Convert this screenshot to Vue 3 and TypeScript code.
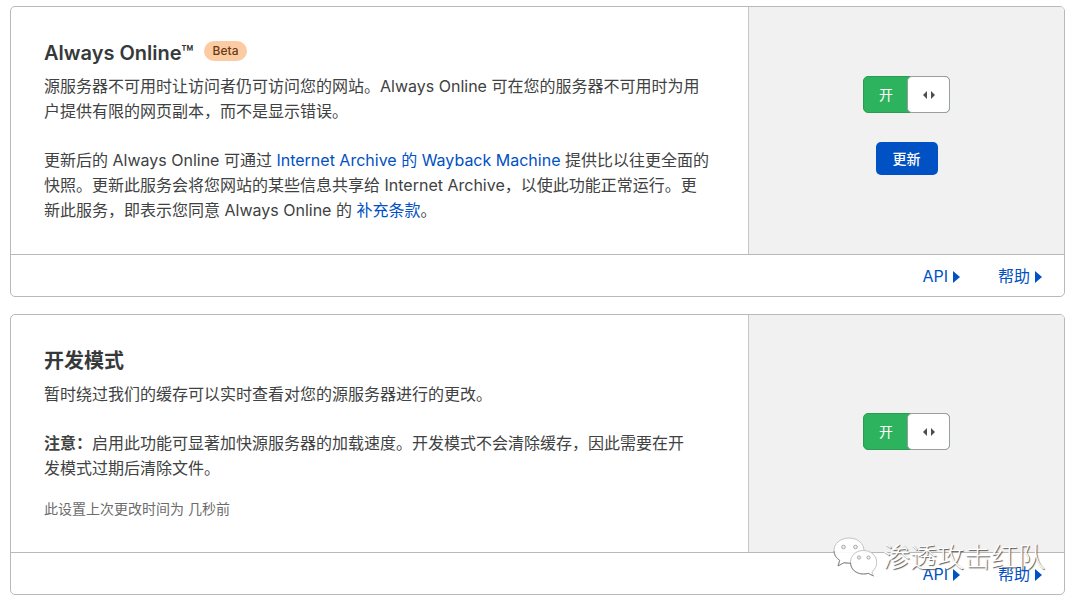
<script setup lang="ts">
import { ref } from 'vue'

const alwaysOnline = ref(true)
const devMode = ref(true)
</script>

<template>
  <main class="page">
    <section class="card">
      <div class="row">
        <div class="info">
          <h2>Always Online™ <span class="badge">Beta</span></h2>
          <p>源服务器不可用时让访问者仍可访问您的网站。Always Online 可在您的服务器不可用时为用户提供有限的网页副本，而不是显示错误。</p>
          <p>更新后的 Always Online 可通过 <a href="#">Internet Archive 的 Wayback Machine</a> 提供比以往更全面的快照。更新此服务会将您网站的某些信息共享给 Internet Archive，以使此功能正常运行。更新此服务，即表示您同意 Always Online 的 <a href="#">补充条款</a>。</p>
        </div>
        <div class="control">
          <label class="toggle">
            <input v-model="alwaysOnline" type="checkbox" aria-label="Always Online" />
            <span class="state">开</span>
            <span class="knob">
              <svg width="14" height="10" viewBox="0 0 14 10"><path d="M5 1v8L1 5zM9 1v8l4-4z" fill="#4d4d4d" /></svg>
            </span>
          </label>
          <button type="button" class="update">更新</button>
        </div>
      </div>
      <footer>
        <a href="#">API<svg width="7" height="12" viewBox="0 0 7 12"><path d="M0 0l7 6-7 6z" fill="currentColor" /></svg></a>
        <a href="#">帮助<svg width="7" height="12" viewBox="0 0 7 12"><path d="M0 0l7 6-7 6z" fill="currentColor" /></svg></a>
      </footer>
    </section>

    <section class="card">
      <div class="row">
        <div class="info">
          <h2>开发模式</h2>
          <p>暂时绕过我们的缓存可以实时查看对您的源服务器进行的更改。</p>
          <p><strong>注意：</strong>启用此功能可显著加快源服务器的加载速度。开发模式不会清除缓存，因此需要在开<br />发模式过期后清除文件。</p>
          <p class="changed">此设置上次更改时间为 几秒前</p>
        </div>
        <div class="control">
          <label class="toggle">
            <input v-model="devMode" type="checkbox" aria-label="开发模式" />
            <span class="state">开</span>
            <span class="knob">
              <svg width="14" height="10" viewBox="0 0 14 10"><path d="M5 1v8L1 5zM9 1v8l4-4z" fill="#4d4d4d" /></svg>
            </span>
          </label>
        </div>
      </div>
      <footer>
        <a href="#">API<svg width="7" height="12" viewBox="0 0 7 12"><path d="M0 0l7 6-7 6z" fill="currentColor" /></svg></a>
        <a href="#">帮助<svg width="7" height="12" viewBox="0 0 7 12"><path d="M0 0l7 6-7 6z" fill="currentColor" /></svg></a>
      </footer>
      <div class="watermark">
        <svg width="46" height="42" viewBox="0 0 46 42">
          <g fill="#fff" fill-opacity=".9" stroke="#c4c4c4" stroke-width="1">
            <path d="M17 1C8.500 1 2 6.500 2 13.500c0 4 2.200 7.500 5.700 9.800L6 29l6-3.300c1.600.5 3.300.8 5 .8 8.500 0 15-5.500 15-12.800S25.500 1 17 1z" />
            <path d="M31.500 13.500C24 13.500 18.500 18.500 18.500 25.500S24 37 31.500 37c1.700 0 3.200-.2 4.700-.7L41.500 39l-1.600-4.200c3-2.200 4.800-5.500 4.800-9.300 0-7-5.700-12-13.200-12z" />
          </g>
          <g fill="none" stroke="#8a8a8a" stroke-width="1">
            <path d="M18.500 25.500C18.500 32 24 37 31.500 37c1.700 0 3.200-.2 4.700-.7L41.500 39M2 14c0 4 2.200 7.200 5.700 9.300L6 29l6-3.300 6 .5" />
          </g>
          <g fill="#f0f0f0" stroke="#a8a8a8" stroke-width="1">
            <circle cx="11.500" cy="10" r="1.800" /><circle cx="23.500" cy="10" r="1.800" />
            <circle cx="27" cy="20.500" r="1.600" /><circle cx="36.500" cy="20.500" r="1.600" />
          </g>
        </svg>
        <span>渗透攻击红队</span>
      </div>
    </section>
  </main>
</template>

<style>
body {
  margin: 0;
  background: #fff;
}
</style>

<style scoped>
.page {
  display: flex;
  flex-direction: column;
  gap: 17px;
  padding: 6px 15px 10px 10px;
  font: 16px/25px Inter, "Noto Sans CJK SC", sans-serif;
  color: #404242;
}
.card {
  position: relative;
  border: 1px solid #b9b9b9;
  border-radius: 5px;
}
.row {
  display: grid;
  grid-template-columns: 7fr 3fr;
}
.info {
  padding: 31px 38px 31px 33px;
}
h2 {
  display: flex;
  align-items: center;
  gap: 10px;
  margin: 0 0 6px;
  color: #36393a;
  font-size: 20px;
  line-height: 30px;
  font-weight: 600;
}
.badge {
  margin-bottom: 4px;
  padding: 0 9px;
  border-radius: 10px;
  background: #fbcca3;
  color: #6b3a12;
  font-size: 12px;
  line-height: 20px;
  font-weight: 500;
}
p {
  margin: 0;
}
p + p {
  margin-top: 24px;
}
p.changed {
  margin-top: 16px;
  font-size: 14px;
  line-height: 24px;
  color: #6b6b6b;
}
a {
  color: #0051c3;
  text-decoration: none;
}
.control {
  display: flex;
  flex-direction: column;
  align-items: center;
  justify-content: center;
  gap: 29px;
  padding-bottom: 4px;
  border-left: 1px solid #c6c6c6;
  border-radius: 0 4px 0 0;
  background: #f1f1f1;
}
.toggle {
  position: relative;
  display: flex;
  box-sizing: border-box;
  width: 87px;
  height: 37px;
  border: 1px solid #2a9c52;
  border-radius: 5px;
  background: #2db35e;
  cursor: pointer;
}
.toggle input {
  position: absolute;
  inset: 0;
  margin: 0;
  opacity: 0;
}
.state {
  flex: 1;
  color: #fff;
  font-size: 14px;
  line-height: 35px;
  text-align: center;
}
.knob {
  display: flex;
  align-items: center;
  justify-content: center;
  width: 41px;
  margin: -1px;
  border: 1px solid #999f9b;
  border-radius: 5px;
  background: #fff;
}
.update {
  margin-bottom: 6px;
  padding: 0 17px;
  border: 0;
  border-radius: 5px;
  background: #0051c3;
  color: #fff;
  font: 500 14px/33px Inter, "Noto Sans CJK SC", sans-serif;
}
footer {
  display: flex;
  justify-content: flex-end;
  gap: 38px;
  padding: 9px 22px 7px;
  border-top: 1px solid #b9b9b9;
}
footer a {
  display: flex;
  align-items: center;
  gap: 5px;
}
.watermark {
  position: absolute;
  right: 19px;
  bottom: 15px;
  display: flex;
  align-items: center;
  gap: 5px;
  color: #fff;
  font-size: 27px;
  line-height: 42px;
  font-weight: 300;
  text-shadow: 1px 1px 1px #555;
  pointer-events: none;
}
</style>
